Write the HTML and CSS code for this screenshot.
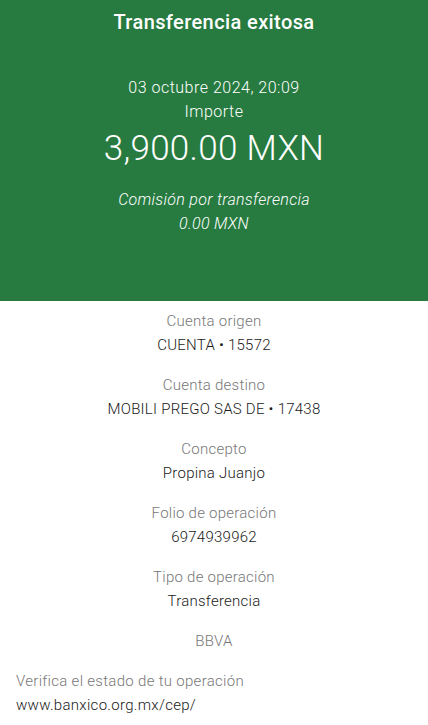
FILE: index.html
```html
<!DOCTYPE html>
<html>
<head>
    <title>Transferencia exitosa</title>
    <link rel="stylesheet" href="styles.css">
</head>
<body>
    <div class="header">
        <h1 class="title">Transferencia exitosa</h1>
        <div class="date">03 octubre 2024, 20:09</div>
        <div class="line">Importe</div>
        <div class="amount">3,900.00 MXN</div>
        <div class="fee">
            <div>Comisión por transferencia</div>
            <div>0.00 MXN</div>
        </div>
    </div>

    <div class="details">
        <div class="item">
            <div class="label">Cuenta origen</div>
            <div class="value">CUENTA • 15572</div>
        </div>
        <div class="item">
            <div class="label">Cuenta destino</div>
            <div class="value">MOBILI PREGO SAS DE • 17438</div>
        </div>
        <div class="item">
            <div class="label">Concepto</div>
            <div class="value">Propina Juanjo</div>
        </div>
        <div class="item">
            <div class="label">Folio de operación</div>
            <div class="value">6974939962</div>
        </div>
        <div class="item">
            <div class="label">Tipo de operación</div>
            <div class="value">Transferencia</div>
        </div>
        <div class="item">
            <div class="label">BBVA</div>
        </div>
    </div>

    <div class="verify">
        <div class="label">Verifica el estado de tu operación</div>
        <div class="value">www.banxico.org.mx/cep/</div>
    </div>
</body>
</html>
```

FILE: styles.css
```css
body {
    margin: 0;
    font-family: Roboto, "Liberation Sans", sans-serif;
    font-weight: 300;
    font-size: 16px;
    line-height: 24px;
    background: #fff;
}
.header {
    background-color: #277b40;
    color: #fff;
    text-align: center;
    height: 301px;
    box-sizing: border-box;
    padding-top: 10px;
    letter-spacing: 0.5px;
}
.title {
    margin: 0 0 42px;
    font-size: 20px;
    font-weight: 500;
    line-height: 24px;
    letter-spacing: 0.4px;
}
.amount {
    margin-top: 5px;
    font-size: 35px;
    line-height: 40px;
    letter-spacing: 0.3px;
}
.fee {
    margin-top: 19px;
    font-style: italic;
    letter-spacing: 0.3px;
}
.details {
    text-align: center;
    padding-top: 8px;
    font-size: 15px;
    letter-spacing: 0.25px;
}
.item {
    margin-bottom: 16px;
}
.label {
    color: #777;
}
.value {
    color: #1a1a1a;
}
.verify {
    padding: 0 16px;
    font-size: 15px;
    letter-spacing: 0.3px;
}
```
